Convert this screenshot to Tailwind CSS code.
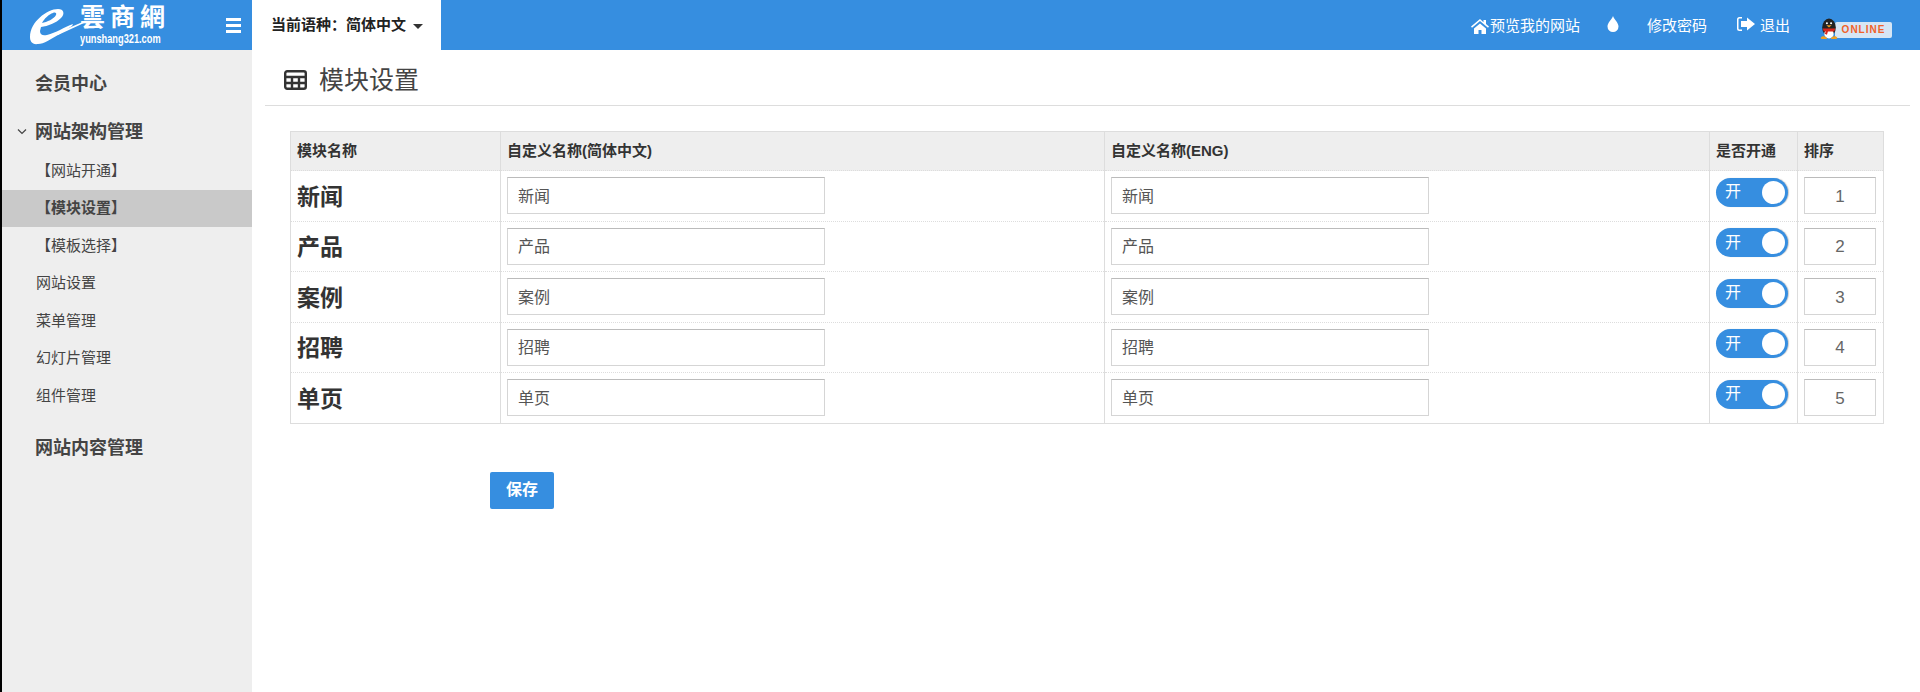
<!DOCTYPE html>
<html lang="zh">
<head>
  <meta charset="UTF-8">
  <script src="https://cdn.jsdelivr.net/npm/@tailwindcss/browser@4"></script>
  <title>模块设置</title>
</head>
<body class="h-[692px] overflow-hidden bg-white border-l-2 border-black text-[#444] font-['Liberation_Sans','Noto_Sans_CJK_SC',sans-serif]">
  <!-- top bar -->
  <header class="flex h-[50px] bg-[#368ee0] text-white">
    <div class="relative flex w-[250px] shrink-0 items-center">
      <svg class="absolute left-[25px] top-[4px]" width="60" height="42" viewBox="0 0 60 42">
        <path d="M3 33C3 18 20 5 31 5c6 0 7 5 3 9-5 5-13 8-20 9l-1 4c0 4 3 5 7 4 9-2 17-8 26-11l-1 2-14 9c-7 4-14 9-20 9-6 1-8-3-8-7zM15 19c5-1 12-4 14-8 1-2-1-3-3-2-4 1-9 6-11 10z" fill="#fff"/>
        <path d="M30 29 58 17l-1 2-26 12z" fill="#fff"/>
      </svg>
      <div class="absolute left-[78px] top-[2px] w-[85px] leading-none">
        <div class="text-center text-[25px] leading-[32px] tracking-[5px] font-bold whitespace-nowrap font-['Liberation_Serif','Noto_Sans_CJK_TC',serif]">雲商網</div>
        <div class="origin-left scale-x-[0.77] text-[12px] font-bold leading-[11px] whitespace-nowrap">yunshang321.com</div>
      </div>
      <div class="absolute left-[224px] top-[18px] flex w-[15px] flex-col gap-[3px]">
        <span class="h-[3px] bg-white"></span>
        <span class="h-[3px] bg-white"></span>
        <span class="h-[3px] bg-white"></span>
      </div>
    </div>
    <div class="flex w-[189px] items-center gap-[7px] bg-white pl-[19px] text-[15px] font-bold text-[#222]">
      <span class="whitespace-nowrap">当前语种：简体中文</span>
      <span class="mt-[2px] h-0 w-0 border-x-[5px] border-t-[5px] border-x-transparent border-t-[#333]"></span>
    </div>
    <nav class="ml-auto flex items-center pt-[2px] text-[15px]">
      <svg class="mr-px" width="18" height="15" viewBox="0 0 18 15" fill="#fff"><path d="M9 0 0 7.500l1 1.200L9 2l8 6.700 1-1.200-3-2.500V1h-2.500v2.300zM3 9.500V15h4.500v-4h3v4H15V9.500L9 4.500z"/></svg>
      <span class="whitespace-nowrap">预览我的网站</span>
      <svg class="ml-[27px] mb-[4px]" width="12" height="16" viewBox="0 0 12 16" fill="#fff"><path d="M6 0c1 3.500 5.500 6.500 5.500 10.500a5.500 5.500 0 0 1-11 0C.5 6.500 5 3.500 6 0z"/></svg>
      <span class="ml-[28px] whitespace-nowrap">修改密码</span>
      <svg class="ml-[29px] mb-[4px]" width="19" height="16" viewBox="0 0 19 16" fill="#fff"><path d="M6 1H3.500A2.500 2.500 0 0 0 1 3.500v9A2.500 2.500 0 0 0 3.500 15H6v-1.500H3.500a1 1 0 0 1-1-1v-9a1 1 0 0 1 1-1H6z"/><path d="M11 1.500 19 8l-8 6.500V11H5V5h6z"/></svg>
      <span class="ml-[5px] whitespace-nowrap">退出</span>
      <div class="relative ml-[29px] mr-[28px] mt-[7px] flex h-[20px] w-[73px] items-center">
        <svg class="absolute left-0 top-[-2px] z-10" width="20" height="22" viewBox="0 0 18 21">
          <ellipse cx="9" cy="9" rx="6.500" ry="8.500" fill="#222"/>
          <ellipse cx="9" cy="15" rx="4.500" ry="4.500" fill="#fff"/>
          <circle cx="7" cy="5" r="1" fill="#fff"/>
          <circle cx="11" cy="5" r="1" fill="#fff"/>
          <path d="M6.500 7h5L9 9z" fill="#f0a020"/>
          <path d="M3 10h12l-1 3H8l-1 3-2-1 1-2H4z" fill="#d9261c"/>
          <path d="M1 19c1-2 4-2 6 0v1H2zM11 19c2-2 5-2 6 0l-1 1h-5z" fill="#f0a020"/>
        </svg>
        <div class="ml-[16px] flex h-[16px] w-[57px] items-center justify-center rounded-[2px] bg-[#d6e6f5] text-[10px] font-bold leading-none tracking-[1px] text-[#f0622a]">ONLINE</div>
      </div>
    </nav>
  </header>

  <div class="flex h-[642px]">
    <!-- sidebar -->
    <aside class="w-[250px] shrink-0 bg-[#eee] pt-[14px] text-[15px]">
      <div class="flex h-[40px] items-center pl-[33px] text-[18px] font-bold">会员中心</div>
      <div class="relative mt-[8px] flex h-[40px] items-center pl-[33px] text-[18px] font-bold">
        <svg class="absolute left-[14px] top-[16px]" width="12" height="8" viewBox="0 0 12 8" fill="none" stroke="#444" stroke-width="1.200"><path d="M2 1.500 6 5.500l4-4"/></svg>
        网站架构管理
      </div>
      <ul>
        <li class="flex h-[37.500px] items-center pl-[34px]">【网站开通】</li>
        <li class="flex h-[37.500px] items-center bg-[#c9c9c9] pl-[34px] font-bold">【模块设置】</li>
        <li class="flex h-[37.500px] items-center pl-[34px]">【模板选择】</li>
        <li class="flex h-[37.500px] items-center pl-[34px]">网站设置</li>
        <li class="flex h-[37.500px] items-center pl-[34px]">菜单管理</li>
        <li class="flex h-[37.500px] items-center pl-[34px]">幻灯片管理</li>
        <li class="flex h-[37.500px] items-center pl-[34px]">组件管理</li>
      </ul>
      <div class="mt-[14px] flex h-[40px] items-center pl-[33px] text-[18px] font-bold">网站内容管理</div>
    </aside>

    <!-- main -->
    <main class="min-w-0 flex-1">
      <div class="ml-[13px] mr-[10px] flex h-[56px] items-center border-b border-[#ddd] pt-[6px] pl-[19px] text-[25px] text-[#444]">
        <svg class="mb-[2px]" width="23" height="20" viewBox="0 0 23 20" fill="none" stroke="#333" stroke-width="2.400"><rect x="1.200" y="1.200" width="20.600" height="17.600" rx="2"/><path d="M1 7h21M1 13h21M8 7v12M15 7v12"/></svg>
        <span class="ml-[12px]">模块设置</span>
      </div>

      <table class="ml-[38px] mt-[25px] w-[1594px] table-fixed border-collapse border border-[#ddd] text-[14px]">
        <colgroup>
          <col class="w-[210px]"><col class="w-[604px]"><col class="w-[605px]"><col class="w-[88px]"><col>
        </colgroup>
        <thead class="bg-[#eee] text-left text-[15px] text-[#333]">
          <tr class="h-[39px]">
            <th class="border-x border-b border-[#ddd] [border-bottom-style:dotted] px-[6px]">模块名称</th>
            <th class="border-x border-b border-[#ddd] [border-bottom-style:dotted] px-[6px]">自定义名称(简体中文)</th>
            <th class="border-x border-b border-[#ddd] [border-bottom-style:dotted] px-[6px]">自定义名称(ENG)</th>
            <th class="border-x border-b border-[#ddd] [border-bottom-style:dotted] px-[6px]">是否开通</th>
            <th class="border-x border-b border-[#ddd] [border-bottom-style:dotted] px-[6px]">排序</th>
          </tr>
        </thead>
        <tbody>
          <tr class="h-[50.500px]">
            <td class="border-x border-b border-[#ddd] [border-bottom-style:dotted] px-[6px] pt-[2px] text-[23px] font-bold text-[#333]">新闻</td>
            <td class="border-x border-b border-[#ddd] [border-bottom-style:dotted] px-[6px]"><input value="新闻" class="h-[37px] w-[318px] border border-[#d5d5d5] border-t-[#bbb] px-[10px] pb-[2px] text-[16px] text-[#555]"></td>
            <td class="border-x border-b border-[#ddd] [border-bottom-style:dotted] px-[6px]"><input value="新闻" class="h-[37px] w-[318px] border border-[#d5d5d5] border-t-[#bbb] px-[10px] pb-[2px] text-[16px] text-[#555]"></td>
            <td class="border-x border-b border-[#ddd] [border-bottom-style:dotted] px-[6px]">
              <div class="mb-[7px] flex h-[29px] w-[72px] items-center justify-between rounded-full bg-[#368ee0] pl-[9px] pr-[3px] text-[16px] text-white shadow-[1px_0_1px_#ccc]">开<span class="h-[23px] w-[23px] rounded-full bg-white"></span></div>
            </td>
            <td class="border-x border-b border-[#ddd] [border-bottom-style:dotted] px-[6px]"><input value="1" class="h-[37px] w-[72px] border border-[#d5d5d5] border-t-[#bbb] pt-[2px] text-center text-[17px] text-[#666]"></td>
          </tr>
          <tr class="h-[50.500px]">
            <td class="border-x border-b border-[#ddd] [border-bottom-style:dotted] px-[6px] pt-[2px] text-[23px] font-bold text-[#333]">产品</td>
            <td class="border-x border-b border-[#ddd] [border-bottom-style:dotted] px-[6px]"><input value="产品" class="h-[37px] w-[318px] border border-[#d5d5d5] border-t-[#bbb] px-[10px] pb-[2px] text-[16px] text-[#555]"></td>
            <td class="border-x border-b border-[#ddd] [border-bottom-style:dotted] px-[6px]"><input value="产品" class="h-[37px] w-[318px] border border-[#d5d5d5] border-t-[#bbb] px-[10px] pb-[2px] text-[16px] text-[#555]"></td>
            <td class="border-x border-b border-[#ddd] [border-bottom-style:dotted] px-[6px]">
              <div class="mb-[7px] flex h-[29px] w-[72px] items-center justify-between rounded-full bg-[#368ee0] pl-[9px] pr-[3px] text-[16px] text-white shadow-[1px_0_1px_#ccc]">开<span class="h-[23px] w-[23px] rounded-full bg-white"></span></div>
            </td>
            <td class="border-x border-b border-[#ddd] [border-bottom-style:dotted] px-[6px]"><input value="2" class="h-[37px] w-[72px] border border-[#d5d5d5] border-t-[#bbb] pt-[2px] text-center text-[17px] text-[#666]"></td>
          </tr>
          <tr class="h-[50.500px]">
            <td class="border-x border-b border-[#ddd] [border-bottom-style:dotted] px-[6px] pt-[2px] text-[23px] font-bold text-[#333]">案例</td>
            <td class="border-x border-b border-[#ddd] [border-bottom-style:dotted] px-[6px]"><input value="案例" class="h-[37px] w-[318px] border border-[#d5d5d5] border-t-[#bbb] px-[10px] pb-[2px] text-[16px] text-[#555]"></td>
            <td class="border-x border-b border-[#ddd] [border-bottom-style:dotted] px-[6px]"><input value="案例" class="h-[37px] w-[318px] border border-[#d5d5d5] border-t-[#bbb] px-[10px] pb-[2px] text-[16px] text-[#555]"></td>
            <td class="border-x border-b border-[#ddd] [border-bottom-style:dotted] px-[6px]">
              <div class="mb-[7px] flex h-[29px] w-[72px] items-center justify-between rounded-full bg-[#368ee0] pl-[9px] pr-[3px] text-[16px] text-white shadow-[1px_0_1px_#ccc]">开<span class="h-[23px] w-[23px] rounded-full bg-white"></span></div>
            </td>
            <td class="border-x border-b border-[#ddd] [border-bottom-style:dotted] px-[6px]"><input value="3" class="h-[37px] w-[72px] border border-[#d5d5d5] border-t-[#bbb] pt-[2px] text-center text-[17px] text-[#666]"></td>
          </tr>
          <tr class="h-[50.500px]">
            <td class="border-x border-b border-[#ddd] [border-bottom-style:dotted] px-[6px] pt-[2px] text-[23px] font-bold text-[#333]">招聘</td>
            <td class="border-x border-b border-[#ddd] [border-bottom-style:dotted] px-[6px]"><input value="招聘" class="h-[37px] w-[318px] border border-[#d5d5d5] border-t-[#bbb] px-[10px] pb-[2px] text-[16px] text-[#555]"></td>
            <td class="border-x border-b border-[#ddd] [border-bottom-style:dotted] px-[6px]"><input value="招聘" class="h-[37px] w-[318px] border border-[#d5d5d5] border-t-[#bbb] px-[10px] pb-[2px] text-[16px] text-[#555]"></td>
            <td class="border-x border-b border-[#ddd] [border-bottom-style:dotted] px-[6px]">
              <div class="mb-[7px] flex h-[29px] w-[72px] items-center justify-between rounded-full bg-[#368ee0] pl-[9px] pr-[3px] text-[16px] text-white shadow-[1px_0_1px_#ccc]">开<span class="h-[23px] w-[23px] rounded-full bg-white"></span></div>
            </td>
            <td class="border-x border-b border-[#ddd] [border-bottom-style:dotted] px-[6px]"><input value="4" class="h-[37px] w-[72px] border border-[#d5d5d5] border-t-[#bbb] pt-[2px] text-center text-[17px] text-[#666]"></td>
          </tr>
          <tr class="h-[50.500px]">
            <td class="border-x border-[#ddd] px-[6px] pt-[2px] text-[23px] font-bold text-[#333]">单页</td>
            <td class="border-x border-[#ddd] px-[6px]"><input value="单页" class="h-[37px] w-[318px] border border-[#d5d5d5] border-t-[#bbb] px-[10px] pb-[2px] text-[16px] text-[#555]"></td>
            <td class="border-x border-[#ddd] px-[6px]"><input value="单页" class="h-[37px] w-[318px] border border-[#d5d5d5] border-t-[#bbb] px-[10px] pb-[2px] text-[16px] text-[#555]"></td>
            <td class="border-x border-[#ddd] px-[6px]">
              <div class="mb-[7px] flex h-[29px] w-[72px] items-center justify-between rounded-full bg-[#368ee0] pl-[9px] pr-[3px] text-[16px] text-white shadow-[1px_0_1px_#ccc]">开<span class="h-[23px] w-[23px] rounded-full bg-white"></span></div>
            </td>
            <td class="border-x border-[#ddd] px-[6px]"><input value="5" class="h-[37px] w-[72px] border border-[#d5d5d5] border-t-[#bbb] pt-[2px] text-center text-[17px] text-[#666]"></td>
          </tr>
        </tbody>
      </table>

      <button class="ml-[238px] mt-[48px] h-[37px] w-[64px] rounded-[2px] bg-[#368ee0] text-[16px] font-bold text-white">保存</button>
    </main>
  </div>
</body>
</html>
